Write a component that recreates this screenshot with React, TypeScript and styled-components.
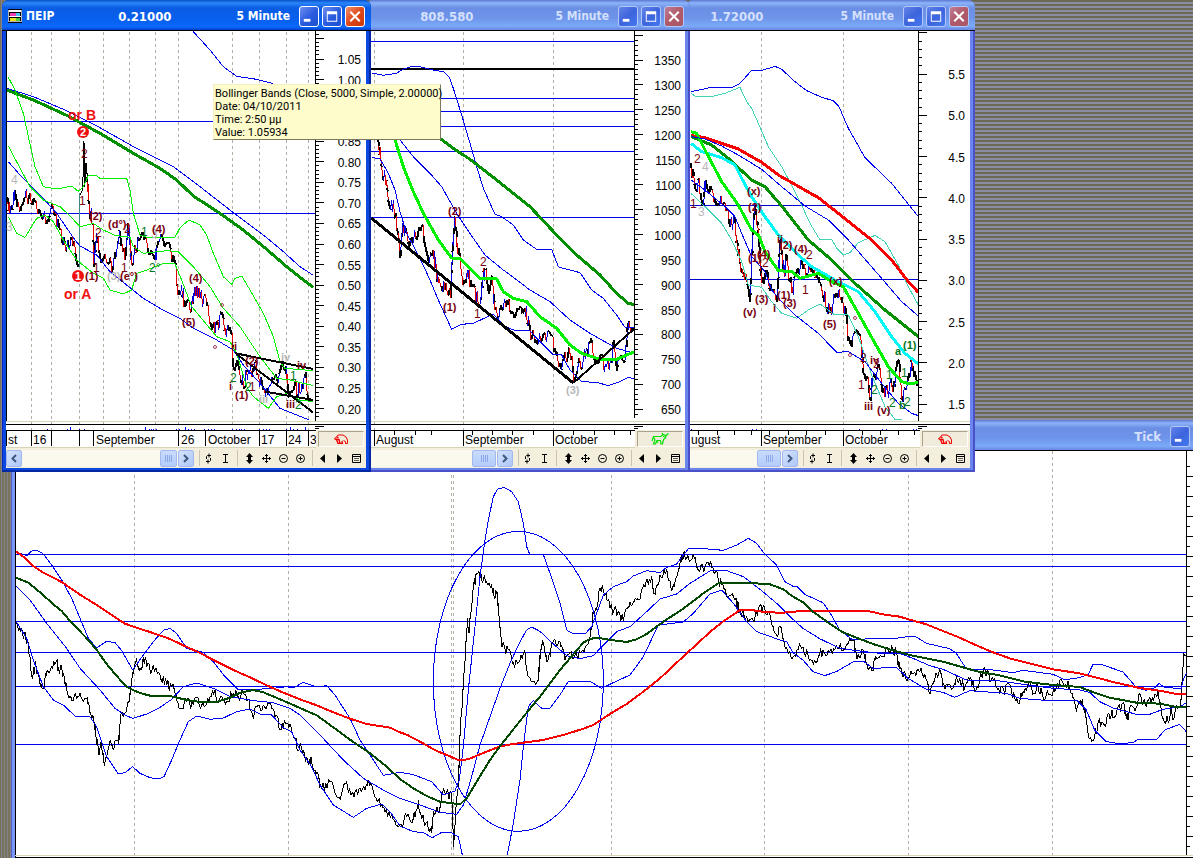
import React from "react";
import styled, { createGlobalStyle } from "styled-components";

const uiFont = `"DejaVu Sans Condensed", "DejaVu Sans", sans-serif`;
const chartFont = `"Liberation Sans", Arial, sans-serif`;

const GlobalStyle = createGlobalStyle`
  * { box-sizing: border-box; }
  body { margin: 0; background: #7c7a6c; font-family: ${uiFont}; }
  button { font: inherit; padding: 0; cursor: pointer; }
`;

/* ---------- desktop and windows ---------- */

const Desktop = styled.main`
  position: relative;
  min-height: 100vh;
  overflow: hidden;
  background: repeating-linear-gradient(#6c6b52 0 2px, #8c8ca4 2px 4px);
`;

const Edge = styled.div`
  position: absolute;
  inset: 0 auto 0 0;
  width: 12px;
  background: repeating-linear-gradient(90deg, #757258 0 1px, #848290 1px 2px, #7a765c 2px 3px);
`;

const WindowFrame = styled.section<{ $active?: boolean; $left: number; $width: number; $layer: number }>`
  position: absolute;
  top: 0;
  left: ${(p) => p.$left}px;
  width: ${(p) => p.$width}px;
  z-index: ${(p) => p.$layer};
  display: flex;
  flex-direction: column;
  padding: 0 5px 4px 4px;
  border-radius: 7px 7px 0 0;
  background: ${(p) => (p.$active ? "#0a48e0" : "#6a86ee")};
  box-shadow: inset -2px -2px 0 ${(p) => (p.$active ? "#0428a4" : "#4a50c8")},
    inset 1px 0 0 ${(p) => (p.$active ? "#0428c4" : "#5664d0")};
`;

const TickFrame = styled.section`
  position: absolute;
  inset: 420px 0 0 11px;
  display: flex;
  flex-direction: column;
  padding-left: 4px;
  background: linear-gradient(90deg, #5560c0 0 1px, #7896f6 1px 4px, #fff 4px);
`;

const TitleBar = styled.header<{ $active?: boolean }>`
  display: flex;
  align-items: center;
  height: 31px;
  margin: 0 -5px 0 -4px;
  padding: 2px 6px 0 6px;
  border-bottom: 1px solid #000;
  border-radius: 7px 7px 0 0;
  color: ${(p) => (p.$active ? "#fff" : "#d4e0fc")};
  font-size: 12px;
  font-weight: bold;
  white-space: pre;
  background: ${(p) =>
    p.$active
      ? "linear-gradient(#0a50c8 0, #2a86fa 3px, #0a5ce4 8px, #0860ee 20px, #0a68fc 27px, #0440c8 30px)"
      : "linear-gradient(#5c78d0 0, #8cb4fa 3px, #6a8ee4 8px, #6e94ea 18px, #7aaaf8 26px, #6a86e0 30px)"};
`;

const TickTitle = styled(TitleBar)`
  margin: 0 0 0 -4px;
  padding-right: 3px;
  border-radius: 0;
`;

const Name = styled.h1`
  margin: 0 0 0 4px;
  font-size: 12px;
`;

const Price = styled.span<{ $gap: number }>`
  margin-left: auto;
  margin-right: ${(p) => p.$gap}px;
  font-size: 13px;
`;

const Interval = styled.span`
  margin-right: 9px;
`;

const CaptionButtons = styled.div`
  display: flex;
  gap: 3px;
`;

const CaptionButton = styled.button<{ $kind: "plain" | "close"; $active?: boolean }>`
  display: grid;
  place-items: center;
  width: 20px;
  height: 21px;
  border: 1px solid ${(p) => (p.$active ? "#fff" : "#b4c8f8")};
  border-radius: 3px;
  background: ${(p) =>
    p.$kind === "close"
      ? p.$active
        ? "linear-gradient(135deg, #f09070, #e04818 50%, #c83808)"
        : "linear-gradient(135deg, #c08098, #b05868 50%, #a85868)"
      : p.$active
        ? "linear-gradient(135deg, #7090f0, #2c5ce0 50%, #1c50d0)"
        : "linear-gradient(135deg, #6484e8, #3c64dc 50%, #4478f0)"};
`;

const DateRow = styled.div`
  display: grid;
  grid-template-columns: 1fr 50px;
  background: #f3edda;
`;

const AnimalButton = styled.button`
  display: grid;
  place-items: center;
  margin: 1px 2px;
  border: 1px solid;
  border-color: #a8a490 #fff #fff #a8a490;
  background: #f1ebdc;
`;

const Toolbar = styled.footer`
  display: flex;
  align-items: center;
  height: 20px;
  padding-right: 1px;
  background: #f4eedc;
`;

const ScrollBar = styled.div`
  display: flex;
  flex: 1;
  height: 17px;
  margin-right: 2px;
  background: #fbf9ee;
`;

const ScrollTrack = styled.div`
  display: flex;
  flex: 1;
  justify-content: flex-end;
`;

const ScrollThumb = styled.button<{ $width: number }>`
  display: grid;
  place-items: center;
  width: ${(p) => p.$width}px;
  margin-right: 1px;
  border: 1px solid #a4b8f0;
  border-radius: 2px;
  background: linear-gradient(#c8dcfe, #b4ccfa);
`;

const ScrollButton = styled.button`
  display: grid;
  place-items: center;
  width: 16px;
  border: 1px solid #a4b8f0;
  border-radius: 2px;
  background: linear-gradient(135deg, #d4e2fe, #aec6f8);
`;

const Tool = styled.button`
  display: grid;
  place-items: center;
  width: 17px;
  height: 18px;
  border: 0;
  background: none;
`;

const ToolGap = styled.span<{ $w: number }>`
  width: ${(p) => p.$w}px;
  height: 16px;
  background: linear-gradient(#c8c4b0, #c8c4b0) 3px 0 / 1px 100% no-repeat;
`;

const Tooltip = styled.div`
  position: absolute;
  top: 84px;
  left: 213px;
  z-index: 9;
  width: 228px;
  padding: 2px 0 0 1px;
  height: 56px;
  border: 1px solid;
  border-color: #f4f0c0 #7c7860 #7c7860 #f4f0c0;
  background: #fefccb;
  color: #000;
  font-family: Roboto, sans-serif;
  font-size: 11px;
  line-height: 13px;
  white-space: nowrap;
`;

const ChartSvg = styled.svg`
  display: block;
  background: #fff;
  font-family: ${chartFont};
  font-size: 12px;
`;

/* ---------- chart parts ---------- */

const BLUE = "#0000f0";
const GREEN = "#009000";
const LIME = "#00f000";
const BROWN = "#780010";
const GREY = "#b8b8b8";
const LEAF = "#007820";
const TEAL = "#40d4b4";

/* Recorded samples hold three units to the pixel. */
const Samples = ({ x = 0, y = 0, children }: { x?: number; y?: number; children: React.ReactNode }) => (
  <g transform={`translate(${x} ${y}) scale(0.33333)`} fill="none" strokeLinejoin="round">
    {children}
  </g>
);

const Trace = ({ d, c = BLUE, w = 1 }: { d: string; c?: string; w?: number }) => (
  <polyline
    points={d}
    stroke={c}
    strokeWidth={w}
    vectorEffect="non-scaling-stroke"
    shapeRendering="crispEdges"
  />
);

type Pt = [number, number];

/* Fills in small tick-to-tick swings between the recorded turning points. */
function swings(d: string, amp: number, step: number): Pt[] {
  const pts = d.split(" ").map((p) => p.split(",").map(Number) as Pt);
  const out: Pt[] = [pts[0]];
  let seed = 7;
  for (let i = 1; i < pts.length; i++) {
    const [x0, y0] = pts[i - 1];
    const [x1, y1] = pts[i];
    const n = Math.max(1, Math.round(Math.hypot(x1 - x0, (y1 - y0) / 3) / step));
    for (let k = 1; k < n; k++) {
      seed = (seed * 1103515 + 12345) % 2147483;
      const r = seed / 2147483 - 0.5;
      out.push([x0 + ((x1 - x0) * k) / n, y0 + ((y1 - y0) * k) / n + r * amp * 2]);
    }
    out.push([x1, y1]);
  }
  return out;
}

const TickTrace = ({ d }: { d: string }) => <Trace d={swings(d, 16, 4).map((p) => p.join(",")).join(" ")} c="#000" />;

const BarTrace = ({ d }: { d: string }) => {
  const pts = swings(d, 26, 4);
  const paths: Record<string, string> = { "#000": "", "#e00000": "", "#0000e0": "" };
  for (let i = 1; i < pts.length; i++) {
    const dy = pts[i][1] - pts[i - 1][1];
    const c = dy > 22 ? "#e00000" : dy < -22 ? "#0000e0" : "#000";
    paths[c] += `M${pts[i - 1]}L${pts[i]}`;
  }
  return (
    <>
      {Object.entries(paths).map(([c, p]) => (
        <path
          key={c}
          d={p}
          stroke={c}
          strokeWidth={c === "#000" ? 2 : 1}
          vectorEffect="non-scaling-stroke"
          shapeRendering="crispEdges"
        />
      ))}
    </>
  );
};

const Rules = ({ xs, y1, y2 }: { xs: number[]; y1: number; y2: number }) => (
  <g stroke="#b0b0a4" strokeDasharray="3 3" shapeRendering="crispEdges">
    {xs.map((x) => (
      <line key={x} x1={x + 0.5} x2={x + 0.5} y1={y1} y2={y2} />
    ))}
  </g>
);

const Levels = ({ ys, x1, x2, c = BLUE }: { ys: number[]; x1: number; x2: number; c?: string }) => (
  <g stroke={c} shapeRendering="crispEdges">
    {ys.map((y) => (
      <line key={y} x1={x1} x2={x2} y1={y + 0.5} y2={y + 0.5} />
    ))}
  </g>
);

interface AxisProps {
  x: number;
  labelX: number;
  first: number;
  step: number;
  labels: string[];
  bottom: number;
}

const PriceAxis = ({ x, labelX, first, step, labels, bottom }: AxisProps) => {
  const ticks: React.ReactNode[] = [];
  for (let k = -10; k < 200; k++) {
    const y = first + (k * step) / 5;
    if (y < 31 || y > bottom - 1) continue;
    ticks.push(<line key={k} x1={x} x2={x + (k % 5 === 0 ? 9 : 4)} y1={y} y2={y} />);
  }
  return (
    <>
      <g stroke="#000" shapeRendering="crispEdges">
        <line x1={x + 0.5} x2={x + 0.5} y1={31} y2={bottom} />
        {ticks}
      </g>
      <g textAnchor="end">
        {labels.map((t, i) => (
          <text key={t} x={labelX} y={Math.round(first + i * step) + 5}>
            {t}
          </text>
        ))}
      </g>
    </>
  );
};

type Mark = [string, number, number, string?];

const Marks = ({ items, bold }: { items: Mark[]; bold?: boolean }) => (
  <g fontSize={bold ? 11 : 12} fontWeight={bold ? "bold" : "normal"}>
    {items.map(([t, x, y, c = BROWN]) => (
      <text key={`${t}${x}`} x={x} y={y} fill={c}>
        {t}
      </text>
    ))}
  </g>
);

const Ring = ({ x, y }: { x: number; y: number }) => <circle cx={x} cy={y} r="1.5" fill="none" stroke="#a04058" />;

const Disc = ({ x, y, n }: { x: number; y: number; n: string }) => (
  <g>
    <circle cx={x} cy={y} r="6" fill="#f01010" />
    <text x={x} y={y + 4} fill="#fff" fontSize="11" fontWeight="bold" textAnchor="middle">
      {n}
    </text>
  </g>
);

/* Strip under the plot: the pane edge and the volume bars. */
const VolumeStrip = ({ x1, axis, x2, bars }: { x1: number; axis: number; x2: number; bars: number[] }) => (
  <g shapeRendering="crispEdges">
    <rect x={x1} y="421" width={x2 - x1} height="1" fill="#d8d4b8" />
    <rect x={x1} y="424" width={x2 - x1} height="1" fill="#000" />
    <rect x={axis} y="426" width="9" height="1" fill="#000" />
    <rect x={axis} y="428" width="4" height="1" fill="#000" />
    {bars.map((b) => (
      <rect key={b} x={b} y={b % 5 === 0 ? 427 : 429} width="1" height="3" fill={BLUE} />
    ))}
  </g>
);

interface DateAxisProps {
  x1: number;
  x2: number;
  lines: number[];
  ticks?: number[];
  labels: [string, number][];
}

const DateAxis = ({ x1, x2, lines, ticks = [], labels }: DateAxisProps) => (
  <ChartSvg width={x2 - x1} height="18" viewBox={`${x1} 430 ${x2 - x1} 18`}>
    <g shapeRendering="crispEdges">
      <rect x={x1} y="430" width={x2 - x1} height="1" />
      {lines.map((x) => (
        <rect key={x} x={x} y="430" width="1" height="16" />
      ))}
      {ticks.map((x) => (
        <rect key={x} x={x} y="430" width="1" height="5" />
      ))}
      <rect x={x1} y="447" width={x2 - x1} height="1" fill="#d8d4b8" />
    </g>
    {labels.map(([t, x]) => (
      <text key={t} x={x} y="444">
        {t}
      </text>
    ))}
  </ChartSvg>
);

/* ---------- icons ---------- */

const AppIcon = () => (
  <svg width="14" height="14" viewBox="0 0 14 14" shapeRendering="crispEdges">
    <rect width="14" height="14" fill="#000" />
    <rect x="1" y="1" width="12" height="12" fill="#fff" />
    <rect x="1" y="3" width="12" height="10" fill="#000" />
    <rect x="2" y="4" width="10" height="3" fill="#f040b0" />
    <rect x="8" y="4" width="4" height="3" fill="#40c8f0" />
    <rect x="1" y="7" width="12" height="1" fill="#fff" />
    <rect x="2" y="9" width="10" height="3" fill="#e8e020" />
    <rect x="8" y="9" width="4" height="3" fill="#50c840" />
    <path d="M.5 1v12M13.500 1v12M1 12.500h12" stroke="#fff" opacity="0.7" />
  </svg>
);

const glyphs = {
  min: <path d="M4 12h7v3H4z" fill="#fff" />,
  max: <path d="M4 4h11v11H4zM5 7v7h9V7z" fill="#fff" fillRule="evenodd" />,
  close: <path d="M4.500 4.500l10 10M14.500 4.500l-10 10" stroke="#fff" strokeWidth="2.200" fill="none" />,
};

const Caption = ({ kind, active, label }: { kind: keyof typeof glyphs; active?: boolean; label: string }) => (
  <CaptionButton type="button" aria-label={label} $kind={kind === "close" ? "close" : "plain"} $active={active}>
    <svg width="18" height="19" viewBox="0 0 19 19">
      {glyphs[kind]}
    </svg>
  </CaptionButton>
);

const Captions = ({ active }: { active?: boolean }) => (
  <CaptionButtons>
    <Caption kind="min" active={active} label="Minimize" />
    <Caption kind="max" active={active} label="Maximize" />
    <Caption kind="close" active={active} label="Close" />
  </CaptionButtons>
);

const toolGlyphs = {
  refresh: <path d="M3.500 6V3.500L4.500 2.500H8M6 .5V4.500M7.500 5V7.500L6.500 8.500H3M5 6.500V10.500" />,
  text: <path d="M3 1.500H8M3 9.500H8M5.500 1.500V9.500" />,
  vertical: <path d="M5.500 0L9 4H7V7H9L5.500 11L2 7H4V4H2Z" fill="#000" stroke="none" />,
  move: <path d="M5.500 1V10M1 5.500H10M4 2.500H7M4 8.500H7M2.500 4V7M8.500 4V7" />,
  minus: (
    <>
      <circle cx="5.500" cy="5.500" r="4" />
      <path d="M3.500 5.500H7.500" />
    </>
  ),
  plus: (
    <>
      <circle cx="5.500" cy="5.500" r="4" />
      <path d="M3.500 5.500H7.500M5.500 3.500V7.500" />
    </>
  ),
  prev: <path d="M8 1V10L3 5.500Z" fill="#000" stroke="none" />,
  next: <path d="M3 1V10L8 5.500Z" fill="#000" stroke="none" />,
  list: (
    <>
      <path d="M1.500 1.500H9.500V9.500H1.500ZM1.500 3.500H9.500" />
      <path d="M3 5.500H8M3 7.500H8" strokeWidth="0.600" />
    </>
  ),
};

const ToolButton = ({ icon, label }: { icon: keyof typeof toolGlyphs; label: string }) => (
  <Tool type="button" aria-label={label}>
    <svg width="11" height="11" viewBox="0 0 11 11" fill="none" stroke="#000">
      {toolGlyphs[icon]}
    </svg>
  </Tool>
);

const Chevron = ({ back }: { back?: boolean }) => (
  <svg width="8" height="9" viewBox="0 0 8 9" fill="none" stroke="#40587c" strokeWidth="2">
    <path d={back ? "M6 1L2.500 4.500L6 8" : "M2 1L5.500 4.500L2 8"} />
  </svg>
);

const Bear = () => (
  <svg width="14" height="10" viewBox="0 0 14 10" fill="none" stroke="#f00000">
    <path d="M.5 4.500L2.500 3L4 1H9L12 3L13.500 6V9.500H11.500V7.500L9.500 6.500" />
    <path d="M.5 4.500L2 5.500H5L6 9.500H8.500L8 7M2.500 5.500L4 9.500H6M2.500 3.500H4.500" strokeWidth="1.300" />
  </svg>
);

const Bull = () => (
  <svg width="18" height="14" viewBox="0 0 18 14" fill="none" stroke="#00e000">
    <path d="M1 9L2.500 4.500H10L12 2.500L15 3.500L17.500 1.500M12 2.500L11 1M15 3.500L14.500 6L12.500 7.500L11.500 12H10L9.500 8.500H6L4.500 12H2.500L4 8L2.500 5" strokeWidth="1.200" />
    <path d="M12 4.500L14 5M6 8.500L7 11" />
  </svg>
);

/* ---------- chart window ---------- */

interface ChartWindowProps {
  left: number;
  width: number;
  layer: number;
  active?: boolean;
  name?: string;
  price: string;
  gap: number;
  thumb: number;
  back?: boolean;
  animal: React.ReactNode;
  animalLabel: string;
  plot: React.ReactNode;
  dates: React.ReactNode;
}

const ChartWindow = (p: ChartWindowProps) => {
  const inner = p.width - 9;
  const x = p.left + 4;
  return (
    <WindowFrame $left={p.left} $width={p.width} $layer={p.layer} $active={p.active}>
      <TitleBar $active={p.active}>
        {p.name && (
          <>
            <AppIcon />
            <Name>{p.name}</Name>
          </>
        )}
        <Price $gap={p.gap}>{p.price}</Price>
        <Interval>5 Minute</Interval>
        <Captions active={p.active} />
      </TitleBar>
      <ChartSvg width={inner} height="399" viewBox={`${x} 31 ${inner} 399`}>
        {p.plot}
      </ChartSvg>
      <DateRow>
        {p.dates}
        <AnimalButton type="button" aria-label={p.animalLabel}>
          {p.animal}
        </AnimalButton>
      </DateRow>
      <Toolbar>
        <ScrollBar>
          {p.back && (
            <ScrollButton type="button" aria-label="Scroll back">
              <Chevron back />
            </ScrollButton>
          )}
          <ScrollTrack>
            <ScrollThumb type="button" aria-label="Scroll position" $width={p.thumb}>
              <svg width="9" height="7" shapeRendering="crispEdges">
                <path d="M1 0v7M3 0v7M5 0v7M7 0v7" stroke="#8ca8e8" />
              </svg>
            </ScrollThumb>
          </ScrollTrack>
          <ScrollButton type="button" aria-label="Scroll forward">
            <Chevron />
          </ScrollButton>
        </ScrollBar>
        <ToolGap $w={4} />
        <ToolButton icon="refresh" label="Refresh" />
        <ToolButton icon="text" label="Text" />
        <ToolGap $w={7} />
        <ToolButton icon="vertical" label="Scale" />
        <ToolButton icon="move" label="Move" />
        <ToolButton icon="minus" label="Zoom out" />
        <ToolButton icon="plus" label="Zoom in" />
        <ToolGap $w={5} />
        <ToolButton icon="prev" label="Previous" />
        <ToolButton icon="next" label="Next" />
        <ToolButton icon="list" label="List" />
      </Toolbar>
    </WindowFrame>
  );
};

const FirstPlot = () => (
  <>
    <Rules xs={[31, 51, 79, 103, 129, 155, 178, 232, 259, 286, 308]} y1={32} y2={430} />
    <Levels ys={[121, 213]} x1={7} x2={315} />
    <Samples>
      <Trace d="238,580 238,800" c="#408888" />
      <BarTrace d="22,590 30,640 45,570 55,605 65,615 75,590 90,580 105,605 120,630 140,670 155,625 180,690 200,750 215,710 235,800" />
      <Trace d="240,585 248,570 252,424 254,560 258,490 262,530" c="#000" />
      <BarTrace d="262,530 265,600 280,670 282,790 290,700 300,770 320,790 340,800 360,700 375,780 385,670 395,795 420,720 430,700 445,760 465,780 475,725 490,720 510,735 525,790 535,870 545,855 555,920 575,925 585,860 600,895 620,905 633,970 645,1000 650,975 667,945 675,985 690,980 697,1000 700,1100 712,1080 730,1160 745,1110 755,1130 765,1090 790,1170 800,1165 820,1140 835,1150 850,1100 858,1100 865,1180 885,1150 900,1180 915,1130 930,1195 938,1200" />
      <Trace d="580,95 630,150 670,200 710,229 770,238 818,250" />
      <Trace d="20,265 100,290 200,332 300,383 400,440 520,500 600,560 700,638 790,705 850,755 900,800 940,826" />
      <Trace d="25,485 60,525 130,595 170,640 225,720 240,738 290,765 330,815 380,855 430,895 480,925 540,955 580,985 650,1020 700,1050 730,1095 780,1150 840,1225 890,1245 928,1260" />
      <Trace w={3} c={GREEN} d="20,270 100,300 200,346 300,400 400,460 480,505 530,540 580,588 660,640 730,690 800,748 860,800 900,832 940,862" />
      <Trace c={LIME} d="25,232 45,270 70,340 85,410 105,500 130,560 170,567 215,558 235,574 250,560 265,527 290,527 300,535 380,535 390,570 400,640 420,705 440,712 525,712 540,683 567,660 600,675 620,705 640,760 670,830 695,853 705,835 725,828 750,870 790,940 820,1010 840,1085 855,1105 940,1112" />
      <Trace c={LIME} d="25,438 55,495 90,560 130,600 180,620 210,648 240,680 280,670 310,690 345,706 390,712 400,740 430,760 500,752 535,755 580,800 630,860 670,925 720,980 780,1070 830,1135 870,1140 940,1157" />
      <Trace c={LIME} d="25,650 50,700 75,712 110,655 135,645 160,665 190,720 230,780 280,820 310,835 330,870 370,882 395,870 410,820 440,810 490,790 525,792 545,840 575,920 600,950 650,1010 690,1025 710,1060 740,1160 760,1190 805,1225 830,1190 860,1180 900,1200 940,1205" />
      <Trace w={2} c="#000" d="940,1107 707,1060 940,1238" />
      <Trace w={2} c="#000" d="795,1175 940,1200" />
    </Samples>
    <PriceAxis
      x={315}
      labelX={361}
      first={59}
      step={20.56}
      bottom={421}
      labels={"1.05 1.00 0.95 0.90 0.85 0.80 0.75 0.70 0.65 0.60 0.55 0.50 0.45 0.40 0.35 0.30 0.25 0.20".split(" ")}
    />
    <rect x="6" y="31" width="1" height="391" />
    <g fill="#f01010" fontSize="14" fontWeight="bold">
      <text x="68" y="120">or B</text>
      <text x="64" y="299">or A</text>
    </g>
    <Disc x={83} y={132} n="2" />
    <Disc x={78} y={276} n="1" />
    <Marks
      items={[
        ["4", 11, 184, GREY], ["3", 6, 231, GREY], ["2", 81, 158], ["1", 79, 205], ["2", 95, 237], ["2", 124, 233],
        ["1", 141, 236, LEAF], ["3", 151, 238, GREY], ["1", 93, 272], ["1", 121, 272], ["2°", 149, 272, LEAF],
        ["2", 230, 382, LEAF], ["2", 245, 391, LEAF], ["1", 249, 391], ["1", 290, 380, LEAF], ["2", 295, 409, LEAF],
      ]}
    />
    <Marks
      bold
      items={[
        ["(3)", 107, 280, GREY], ["(2)", 89, 220], ["(d°)", 108, 228], ["(4)", 152, 233], ["(1)", 85, 280],
        ["(e°)", 120, 280], ["(4)", 189, 282], ["(5)", 182, 326], ["ii", 231, 350], ["i", 229, 390], ["(1)", 235, 399],
        ["(2)", 245, 365], ["iii", 259, 403, GREY], ["iv", 281, 361, GREY], ["iv", 297, 369], ["iii", 286, 408],
      ]}
    />
    <Ring x={222} y={305} />
    <Ring x={215} y={347} />
    <VolumeStrip
      x1={6} axis={315} x2={366}
      bars={[47, 67, 70, 79, 84, 145, 149, 151, 153, 156, 176, 179, 185, 188, 191, 194, 204, 208, 211, 214, 232, 236, 239, 241, 244, 259, 263, 266, 269, 286, 290, 293, 297, 305]}
    />
  </>
);

const SecondPlot = () => (
  <>
    <Rules xs={[374, 463, 553]} y1={32} y2={430} />
    <Levels ys={[41, 98, 111, 126, 151, 217]} x1={370} x2={634} />
    <rect x="370" y="68" width="264" height="2" />
    <Samples x={370}>
      <BarTrace d="25,420 35,500 50,540 62,630 70,600 85,700 90,770 100,680 120,730 155,680 165,730 175,780 190,750 205,850 215,860 225,870 243,895 248,750 256,650 262,730 280,840 292,810 305,860 328,915 345,810 355,870 365,830 375,930 390,930 410,900 430,940 450,920 465,925 480,990 497,1030 525,1000 550,1010 565,1100 575,1110 595,1060 605,1080 613,1140 625,1090 640,1080 660,1030 680,1070 710,1100 725,1080 730,1030 740,1100 745,1070 760,1080 770,1040 775,965 785,985 794,990" />
      <Trace d="5,219 40,226 80,220 95,210 115,202 130,199 150,200 190,210 220,215 237,230 250,265 275,345 300,430 320,500 340,565 375,643 395,650 430,675 460,720 500,748 545,748 565,800 580,805 630,818 665,870 700,895 740,945 765,982 794,982" />
      <Trace d="90,420 130,470 180,520 215,560 260,640 310,715 345,765 400,810 480,870 540,905 600,960 660,1000 740,1045 794,1060" />
      <Trace d="5,472 30,477 55,520 75,570 90,635 110,700 150,775 180,840 205,900 245,988 275,973 310,970 370,942 400,975 430,990 480,993 510,1025 550,1065 575,1065 600,1110 635,1145 680,1147 715,1157 750,1145 775,1132 794,1137" />
      <Trace w={3} c={GREEN} d="210,415 250,445 300,478 380,540 480,620 560,705 620,765 690,825 740,880 775,910 794,914" />
      <Trace w={3} c={LIME} d="75,420 100,500 130,575 160,640 205,720 245,774 270,775 330,835 380,837 400,875 430,895 470,905 510,950 560,985 600,1035 635,1060 690,1078 740,1078 794,1055" />
      <Trace w={3} c="#000" d="5,655 610,1149" />
      <Trace w={2} c="#000" d="610,1149 794,985" />
    </Samples>
    <PriceAxis
      x={634}
      labelX={681}
      first={60}
      step={24.95}
      bottom={418}
      labels={"1350 1300 1250 1200 1150 1100 1050 1000 950 900 850 800 750 700 650".split(" ")}
    />
    <Marks items={[["2", 480, 266], ["1", 474, 318]]} />
    <Marks bold items={[["(2)", 448, 215], ["(1)", 443, 311], ["(3)", 566, 394, GREY]]} />
    <VolumeStrip x1={370} axis={634} x2={685} bars={[]} />
  </>
);

const ThirdPlot = () => (
  <>
    <Rules xs={[761, 843]} y1={32} y2={430} />
    <Levels ys={[205, 279]} x1={690} x2={918} c="#0000d0" />
    <Samples x={685}>
      <BarTrace d="18,490 30,560 40,540 55,605 62,540 80,570 100,610 120,610 135,680 150,660 155,720 165,790 180,840 190,860 196,905 200,780 210,620 220,700 230,850 245,810 260,870 275,900 287,720 300,830 305,770 320,880 335,820 350,780 365,820 380,800 395,820 410,860 425,920 435,940 455,880 470,890 485,950 490,1010 500,1040 510,1000 530,1040 535,1120 550,1130 555,1190 565,1130 585,1110 600,1190 620,1150 625,1160 643,1080 650,1190 665,1170 675,1130 680,1070 692,1130 700,1150" />
      <Trace d="18,275 80,262 140,263 165,250 200,211 225,213 270,199 290,208 330,245 365,272 410,292 445,302 462,320 490,385 540,473 620,550 700,650" />
      <Trace c={TEAL} d="18,280 35,291 80,290 120,280 165,262 185,305 200,325 220,370 250,440 290,500 320,555 345,605 375,670 405,720 440,718 455,745 475,765 495,758 520,728 570,706 600,725 640,795 670,860 700,915" />
      <Trace c={TEAL} d="18,580 60,620 110,670 140,720 170,785 190,855 230,862 260,905 290,940 335,955 370,930 405,912 450,945 490,945 520,1010 560,1125 600,1220 630,1258 650,1258" />
      <Trace w={3} c="#f80000" d="18,407 60,413 160,447 230,487 280,525 400,593 460,640 560,720 620,780 670,845 700,877" />
      <Trace w={3} c={GREEN} d="18,410 80,435 130,475 200,540 240,560 290,618 370,720 440,780 510,850 600,930 700,1010" />
      <Trace w={3} c="#00f8f8" d="18,430 50,455 110,473 150,495 170,535 200,590 240,650 280,705 340,765 380,800 450,840 520,875 570,935 620,1010 660,1060 700,1092" />
      <Trace w={3} c={LIME} d="18,395 35,400 60,450 110,545 160,615 200,690 220,705 240,755 280,812 320,815 345,835 400,820 440,845 475,860 520,940 570,1030 610,1100 650,1145 675,1152 700,1147" />
      <Trace d="18,410 60,417 110,438 160,465 230,508 290,560 360,618 430,660 490,720 590,835 650,905 700,948" />
      <Trace d="18,540 60,570 120,620 150,650 170,700 200,770 240,815 260,870 290,905 330,945 400,1000 455,1057 490,1055 540,1085 590,1150 640,1210 680,1240 700,1247" />
    </Samples>
    <PriceAxis
      x={918}
      labelX={965}
      first={74}
      step={41.25}
      bottom={421}
      labels={"5.5 5.0 4.5 4.0 3.5 3.0 2.5 2.0 1.5".split(" ")}
    />
    <Marks
      items={[
        ["2", 694, 163], ["4", 702, 171, GREY], ["1", 690, 208], ["3", 698, 216, GREY], ["2", 762, 267], ["2", 806, 259],
        ["1", 802, 294], ["2", 860, 362], ["2", 873, 368], ["1", 858, 389], ["1", 886, 379, LEAF], ["1", 901, 377, LEAF],
        ["2", 871, 394, LEAF], ["2", 889, 407, LEAF], ["2", 904, 406, LEAF],
      ]}
    />
    <Marks
      bold
      items={[
        ["(x)", 747, 195], ["(2)", 748, 211], ["ii", 777, 243], ["(1)", 748, 262], ["(4)", 757, 258], ["(2)", 779, 249],
        ["(4)", 794, 253], ["(x)", 829, 285], ["(3)", 755, 303], ["i", 773, 312], ["(1)", 777, 299], ["(3)", 783, 307],
        ["(v)", 743, 316], ["(5)", 823, 328], ["iv", 870, 364], ["iii", 864, 410], ["(v)", 877, 414],
        ["a", 895, 355, LEAF], ["(1)", 903, 349, LEAF], ["b", 899, 409, LEAF],
      ]}
    />
    <Ring x={855} y={318} />
    <Ring x={850} y={355} />
    <VolumeStrip x1={690} axis={918} x2={970} bars={[691, 752, 756, 859, 882, 886, 913, 916]} />
  </>
);

const TickPlot = () => {
  const ticks = [];
  for (let y = 466, k = 0; y < 856; y += 10, k++) {
    ticks.push(<line key={y} x1={1186} x2={k % 2 ? 1193 : 1190} y1={y + 0.5} y2={y + 0.5} />);
  }
  return (
    <ChartSvg width="100%" height="407" viewBox="15 451 1178 407" preserveAspectRatio="xMinYMin slice">
      <Rules xs={[134, 288, 451, 453, 611, 764, 908, 1052]} y1={451} y2={855} />
      <Levels ys={[554, 566, 621, 652, 686, 744]} x1={15} x2={1186} />
      <g stroke="#000" shapeRendering="crispEdges">
        <line x1="1186.5" x2="1186.5" y1="451" y2="855" />
        <line x1="15.500" x2="15.500" y1="451" y2="858" />
        {ticks}
      </g>
      <Samples y={460}>
        <TickTrace d="48,484 60,505 70,535 75,515 83,545 90,590 97,655 107,605 115,650 130,685 140,635 158,625 170,603 178,640 184,615 200,690 215,720 230,715 240,700 250,725 262,712 272,760 282,785 297,885 303,850 313,917 325,870 333,850 340,870 350,840 356,850 362,765 378,755 390,700 403,615 410,595 420,625 436,592 440,620 455,635 468,625 480,645 500,675 515,680 523,690 530,720 545,745 560,725 580,735 590,712 605,735 620,730 630,710 645,690 650,720 665,710 680,725 700,700 715,712 730,700 745,720 758,768 770,740 790,735 800,745 805,730 825,770 843,810 860,790 870,792 885,835 897,870 905,865 925,915 933,890 945,930 965,985 990,965 1005,1000 1018,1012 1030,980 1040,965 1052,1005 1062,1010 1080,985 1092,980 1105,960 1112,970 1135,1020 1155,1055 1175,1065 1195,1100" />
        <Trace d="48,276 80,287 95,273 110,270 130,282 155,315 185,360 215,415 240,475 265,535 290,564 320,544 345,548 365,572 398,630 430,585 460,545 490,511 510,505 530,520 560,565 610,577 640,605 675,650 715,690 760,689 800,686 830,684 860,680 880,684 910,667 950,681 980,677 1005,705 1050,775 1080,840 1120,900 1150,946 1200,937" />
        <Trace d="48,378 90,420 140,490 200,565 240,625 300,690 345,745 380,768 400,775 440,762 480,742 515,718 550,680 590,669 640,685 690,710 760,722 820,728 870,745 900,765 960,825 1030,900 1090,955 1150,990 1200,1015" />
        <Trace d="48,484 80,535 100,600 130,680 160,720 190,735 225,768 270,770 290,800 320,890 355,942 375,938 398,920 420,940 450,953 475,957 492,950 515,900 540,840 565,785 590,768 630,778 670,774 710,755 750,747 780,762 815,765 850,803 875,815 900,870 935,920 960,975 1000,1035 1060,1072 1100,1045 1145,1032 1170,1055 1200,1098" />
        <Trace w={2} c="#f80000" d="48,274 70,290 100,318 130,338 185,366 240,404 290,435 340,468 375,491 403,501 450,516 510,537 550,556 600,579 650,605 700,630 750,652 800,676 850,698 900,718 950,736 1000,757 1050,776 1100,792 1170,803 1200,817" />
        <Trace w={2} c="#004800" d="48,353 85,368 120,397 165,437 185,453 210,483 265,540 290,570 320,612 350,648 380,680 400,691 430,702 455,708 510,708 560,720 600,726 650,726 690,713 720,698 760,690 790,697 850,722 900,744 950,766 1000,802 1050,839 1110,880 1160,920 1200,957" />
      </Samples>
      <Samples x={400} y={460}>
        <TickTrace d="-5,1100 0,1095 20,1070 40,1075 55,1022 65,1075 82,1085 94,1117 100,1055 118,1055 127,1000 155,1005 161,1160 168,1040 175,970 180,830 190,680 203,475 207,520 218,390 230,340 240,355 250,360 260,365 275,375 285,415 290,400 300,500 306,560 325,570 340,607 360,600 373,572 385,650 398,665 415,660 422,570 430,550 440,605 462,540 480,545 495,600 525,585 535,592 548,570 560,555 570,530 580,460 590,450 600,385 607,375 618,400 630,445 655,455 670,482 690,425 710,420 735,380 755,350 763,400 780,345 800,330 805,360 817,388 835,330 845,285 860,295 880,283 895,330 915,320 932,305 945,340 965,375 985,410 1005,420 1020,450 1048,480 1060,482 1075,445 1105,455 1120,500 1132,530 1140,500 1150,535 1165,580 1180,590" />
        <Trace d="0,937 40,944 95,965 130,1005 165,993 178,960 190,860 205,690 225,500 240,350 255,240 265,180 280,110 292,88 312,82 335,95 355,125 370,190 380,260 390,285 430,284 450,340 480,430 500,510 520,522 555,522 575,500 590,460 610,405 640,380 680,365 700,348 740,332 780,338 800,322 830,312 865,266 900,265 970,271 1010,255 1045,235 1070,250 1095,283 1130,315 1155,365 1179,379" />
        <Trace d="0,1015 60,1035 120,1057 170,1063 190,1035 215,950 240,855 270,770 300,685 330,610 360,545 380,510 395,501 420,514 460,552 500,587 540,596 580,587 610,555 650,515 690,500 740,455 780,417 830,402 870,370 930,333 980,332 1030,350 1080,388 1130,430 1179,478" />
        <Trace d="0,1098 40,1115 70,1118 97,1133 125,1117 155,1119 175,1130 187,1185" />
        <Trace d="322,1185 340,1090 360,960 370,860 385,740 400,721 425,745 450,745 480,705 505,664 570,664 605,685 640,668 690,645 730,590 775,495 850,486 880,460 930,402 965,390 1000,430 1040,485 1070,515 1140,540 1160,545 1179,578" />
        <ellipse cx="355" cy="664" rx="255" ry="450" stroke={BLUE} vectorEffect="non-scaling-stroke" shapeRendering="crispEdges" />
        <Trace w={2} c="#f80000" d="0,817 20,824 60,845 110,873 150,889 175,900 205,898 240,883 300,859 340,852 430,840 500,822 550,806 580,795 630,762 680,732 730,695 780,655 830,608 880,562 930,516 970,484 1020,450 1060,451 1100,457 1150,458 1179,455" />
        <Trace w={2} c="#004800" d="0,957 40,985 80,1008 120,1025 180,1033 200,1015 230,965 270,900 305,852 380,758 420,710 450,670 480,630 520,583 550,548 570,537 590,533 640,541 680,546 710,538 740,522 790,485 850,446 910,400 955,370 1050,369 1110,373 1150,388 1179,410" />
      </Samples>
      <Samples x={793} y={460}>
        <TickTrace d="0,590 12,570 30,562 45,585 65,600 90,570 110,575 130,555 150,572 160,555 182,540 192,598 210,570 222,615 240,632 248,590 270,590 280,565 300,570 310,580 320,625 340,662 350,650 380,635 400,660 408,695 425,660 440,628 452,670 475,688 490,650 500,655 515,685 530,660 550,690 560,655 583,630 590,665 605,655 620,700 650,675 675,730 690,695 710,665 722,700 735,680 750,710 775,705 800,660 815,680 825,662 835,700 850,755 865,730 875,745 885,820 900,842 915,790 935,795 957,750 965,770 990,730 1005,780 1015,735 1030,740 1040,700 1060,740 1085,705 1095,690 1110,775 1130,780 1135,740 1140,780 1150,735 1163,740 1172,580 1180,585" />
        <Trace d="0,379 12,379 35,403 90,428 115,465 140,510 180,540 240,535 320,534 350,528 370,531 400,550 470,566 490,580 520,627 600,630 660,638 690,631 780,643 815,659 850,655 885,645 900,613 930,615 990,636 1015,665 1030,683 1060,691 1085,683 1098,670 1115,683 1165,685 1172,655 1180,640" />
        <Trace d="0,478 30,505 80,536 140,565 200,573 260,580 320,580 360,595 410,617 450,628 520,660 620,663 690,673 780,685 860,690 890,697 920,725 960,744 1030,763 1070,763 1110,748 1160,741 1180,728" />
        <Trace d="0,578 30,600 60,635 95,647 130,635 180,606 210,603 240,625 310,622 345,655 400,688 450,697 485,712 530,692 640,700 680,715 780,723 850,720 880,750 905,810 940,845 980,851 1020,848 1035,838 1090,840 1115,810 1160,793 1180,815" />
        <Trace w={2} c="#f80000" d="0,455 60,452 225,453 270,463 320,470 350,479 400,493 450,513 500,533 550,556 600,577 650,595 700,608 780,628 860,640 900,650 960,666 1040,684 1100,692 1150,702 1180,703" />
        <Trace w={2} c="#004800" d="0,410 30,427 60,455 120,498 150,517 190,533 240,552 290,568 350,585 450,605 520,625 560,636 620,646 690,664 760,673 860,681 910,700 950,713 1030,728 1100,731 1150,741 1180,741" />
      </Samples>
      <g shapeRendering="crispEdges">
        <rect x="15" y="855" width="1178" height="1" fill="#d8d4b8" />
        <rect x="15" y="857" width="1178" height="1" />
      </g>
    </ChartSvg>
  );
};

export default function App() {
  return (
    <Desktop>
      <GlobalStyle />
      <Edge />
      <TickFrame>
        <TickTitle>
          <Price $gap={9}>Tick</Price>
          <Caption kind="min" label="Minimize" />
        </TickTitle>
        <TickPlot />
      </TickFrame>
      <ChartWindow
        left={686} width={289} layer={1} price="1.72000" gap={77} thumb={24}
        animal={<Bear />} animalLabel="Bearish" plot={<ThirdPlot />}
        dates={
          <DateAxis
            x1={690} x2={920} lines={[761, 843]} ticks={[698, 717, 734, 751, 769, 788, 806, 825, 862, 880, 898, 914]}
            labels={[["ugust", 691], ["September", 763], ["October", 845]]}
          />
        }
      />
      <ChartWindow
        left={366} width={324} layer={2} price="808.580" gap={82} thumb={24}
        animal={<Bull />} animalLabel="Bullish" plot={<SecondPlot />}
        dates={
          <DateAxis
            x1={370} x2={635} lines={[374, 463, 553]} ticks={[394, 415, 431, 472, 492, 512, 533, 573, 594, 614, 630]}
            labels={[["August", 376], ["September", 465], ["October", 555]]}
          />
        }
      />
      <ChartWindow
        active left={2} width={369} layer={3} name="ΠΕΙΡ" price="0.21000" gap={65} thumb={17} back
        animal={<Bear />} animalLabel="Bearish" plot={<FirstPlot />}
        dates={
          <DateAxis
            x1={6} x2={316} lines={[6, 31, 51, 79, 93, 178, 205, 259, 286, 308]}
            labels={[["st", 8], ["16", 33], ["September", 96], ["26", 181], ["October", 208], ["17", 261], ["24", 288], ["3", 310]]}
          />
        }
      />
      <Tooltip role="tooltip">
        Bollinger Bands (Close, 5000, Simple, 2.00000)
        <br />
        Date: 04/10/2011
        <br />
        Time: 2:50 μμ
        <br />
        Value: 1.05934
      </Tooltip>
    </Desktop>
  );
}
